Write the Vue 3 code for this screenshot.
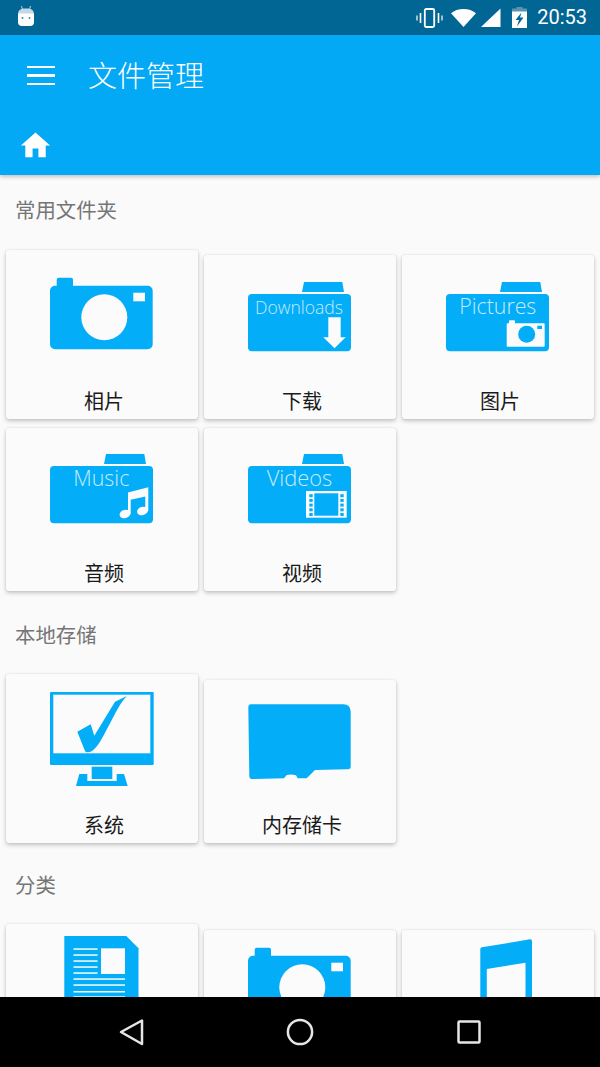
<template>
  <div class="screen">
    <!-- status bar -->
    <div class="status-bar">
      <svg class="android" width="18" height="20" viewBox="0 0 18 20">
        <path d="M4.500 0l1 3.500M13.500 0l-1 3.500" stroke="#b9d3e1" stroke-width="1" fill="none" />
        <path d="M1 8V8a5.500 5.500 0 0 1 5.500-5.500h5A5.500 5.500 0 0 1 17 8z" fill="#c3dae6" />
        <path d="M1 7.500h16V16a4 4 0 0 1-4 4H5a4 4 0 0 1-4-4z" fill="#fff" />
        <circle cx="5.500" cy="12" r="1" fill="#4a88a8" />
        <circle cx="12.500" cy="12" r="1" fill="#4a88a8" />
      </svg>
      <div class="status-right">
        <svg width="27" height="20" viewBox="0 0 27 20">
          <rect x="8.800" y="1" width="9.400" height="18" rx="1.500" fill="none" stroke="#fff" stroke-width="1.800" />
          <path d="M4.500 5v10M22.500 5v10" stroke="#fff" stroke-width="1.600" />
          <path d="M1 7.500v5M26 7.500v5" stroke="#dbe8ef" stroke-width="1.400" />
        </svg>
        <svg class="wifi" width="25" height="18" viewBox="0 0 25 18">
          <path d="M12.500 18L0 4.200C3.400 1.600 7.600 0 12.500 0S21.600 1.600 25 4.200z" fill="#fff" />
        </svg>
        <svg class="signal" width="20" height="19" viewBox="0 0 20 19">
          <path d="M0 19L19.500 0.500V19z" fill="#fff" />
        </svg>
        <svg class="battery" width="15" height="21" viewBox="0 0 15 21">
          <path d="M4.500 0h6v1.500H15V5H0V1.500h4.500z" fill="#5b93b0" />
          <path d="M0 4.500h15V21H0z" fill="#fff" />
          <path d="M9.500 5.500L3.500 13h3.500l-2 6.500L11.500 10.500H8z" fill="#026695" />
        </svg>
        <span class="clock">20:53</span>
      </div>
    </div>

    <!-- app bar -->
    <header class="app-bar">
      <div class="toolbar">
        <div class="menu-icon">
          <span></span>
          <span></span>
          <span></span>
        </div>
        <h1 class="app-title">文件管理</h1>
      </div>
      <div class="crumbs">
        <svg width="35" height="35" viewBox="0 0 24 24" fill="#fff">
          <path d="M10 20v-6h4v6h5v-8h3L12 3 2 12h3v8z" />
        </svg>
      </div>
    </header>

    <main class="content">
      <section v-for="section in sections" :key="section.title" :class="['section', section.cls]">
        <h2 class="section-title">{{ section.title }}</h2>
        <div class="grid">
          <div
            v-for="item in section.items"
            :key="item.icon"
            :class="['card', item.cls]"
          >
            <svg class="icon" width="120" height="110" viewBox="0 0 120 110">
              <!-- folder base, shared by the four library folders -->
              <template v-if="item.folder">
                <path d="M64 17h38.300l1.700 10H62z" fill="#04adf7" />
                <rect x="8" y="29" width="103" height="57.300" rx="4" fill="#04adf7" />
                <text
                  class="folder-text"
                  :x="item.textX"
                  y="49"
                  :font-size="item.textSize"
                  :textLength="item.textLen"
                  lengthAdjust="spacingAndGlyphs"
                >{{ item.folder }}</text>
              </template>

              <g v-if="item.icon === 'camera'">
                <path d="M14.700 25.700v-6a2 2 0 0 1 2-2H29a2 2 0 0 1 2 2v6h74.700a5 5 0 0 1 5 5v53.600a5 5 0 0 1-5 5H13a5 5 0 0 1-5-5V30.700a5 5 0 0 1 5-5z" fill="#04adf7" />
                <circle cx="62.300" cy="57.300" r="23" fill="#fbfbfb" />
                <rect x="91.300" y="32.700" width="11.700" height="8.600" fill="#fbfbfb" />
              </g>

              <path
                v-else-if="item.icon === 'download'"
                d="M88.300 52.300h12.400v20h5L94.500 83.300 83.300 72.300h5z"
                fill="#fbfbfb"
              />

              <g v-else-if="item.icon === 'picture'">
                <path d="M71 58.300v-2a1 1 0 0 1 1-1h4a1 1 0 0 1 1 1v2h28.700a1 1 0 0 1 1 1v21.400a1 1 0 0 1-1 1H69.700a1 1 0 0 1-1-1V59.300a1 1 0 0 1 1-1z" fill="#fbfbfb" />
                <circle cx="88.700" cy="69.300" r="8.500" fill="#04adf7" />
                <rect x="99.300" y="60.700" width="4.700" height="3.300" fill="#04adf7" />
              </g>

              <g v-else-if="item.icon === 'music'" fill="#fbfbfb">
                <path d="M86 55.500l20.300-5.200V74h-3V59.500l-14.600 3.300V77H86z" />
                <ellipse cx="83" cy="77" rx="5.500" ry="4.200" transform="rotate(-15 83 77)" />
                <ellipse cx="100.500" cy="74" rx="5.500" ry="4.200" transform="rotate(-15 100.500 74)" />
              </g>

              <g v-else-if="item.icon === 'film'">
                <rect x="66" y="54" width="40.700" height="26.700" fill="#fbfbfb" />
                <rect x="74.300" y="56.300" width="24" height="22.400" fill="#04adf7" />
                <g fill="#04adf7">
                  <rect v-for="n in 5" :key="n" x="69.300" :y="52.500 + n * 4.700" width="3.400" height="3" />
                  <rect v-for="n in 5" :key="'r' + n" x="100.300" :y="52.500 + n * 4.700" width="3.400" height="3" />
                </g>
              </g>

              <g v-else-if="item.icon === 'system'">
                <rect x="8" y="8" width="103.700" height="73" rx="1" fill="#04adf7" />
                <rect x="11.300" y="10.700" width="97" height="58.600" fill="#fbfbfb" />
                <path d="M35.300 47.700L48.700 40.300L52.300 51.700L73 17.700L84.700 12C76 21 67 43 58 57.700C54 64 50 68 46.300 68.300C44.500 68.500 43.500 68 43 67z" fill="#04adf7" />
                <path d="M37.300 90H82l3.700 12H34z" fill="#04adf7" />
                <path d="M45.300 88h29.400v9H45.300z" fill="#fbfbfb" />
                <rect x="49.700" y="82.700" width="20.600" height="12.300" fill="#04adf7" />
              </g>

              <path
                v-else-if="item.icon === 'sdcard'"
                d="M8.300 17.300Q8.500 14.300 11 14.300H103.300Q110.700 14.500 110.700 21.700V76.700Q110.700 79.300 106.700 79.300L75 80L66.700 88.300H57.700L56 85.300Q51 84 46.700 85L44 88.300L11.700 89Q9.500 89 9.300 86z"
                fill="#04adf7"
              />

              <g v-else-if="item.icon === 'doc'">
                <path d="M22.300 12h62l12.200 12.300V110H22.300z" fill="#04adf7" />
                <rect x="59" y="24.300" width="24" height="25.700" fill="#fbfbfb" />
                <rect v-for="y in [25, 31, 37, 43, 49]" :key="y" x="31.500" :y="y - 0.700" width="24.100" height="1.500" fill="#fbfbfb" />
                <rect v-for="y in [55, 61, 67.700, 73]" :key="y" x="31.500" :y="y - 0.700" width="51.500" height="1.500" fill="#fbfbfb" />
              </g>

              <path
                v-else-if="item.icon === 'note'"
                d="M42.300 19Q42.300 17.500 44 17.300L92 9.300Q94 9 94 11V100H87.500V32.700L48.800 39V100H42.300z"
                fill="#04adf7"
              />
            </svg>
            <div v-if="item.label" class="card-label">{{ item.label }}</div>
          </div>
        </div>
      </section>
    </main>

    <!-- navigation bar -->
    <nav class="nav-bar">
      <svg width="30" height="30" viewBox="0 0 30 30">
        <path d="M5 15L26 3.500V27z" fill="none" stroke="#e6e6e6" stroke-width="2.500" stroke-linejoin="round" />
      </svg>
      <svg width="30" height="30" viewBox="0 0 30 30">
        <circle cx="15" cy="15" r="12.100" fill="none" stroke="#e6e6e6" stroke-width="2.500" />
      </svg>
      <svg width="30" height="30" viewBox="0 0 30 30">
        <rect x="4.500" y="4.500" width="21" height="21" rx="1" fill="none" stroke="#e6e6e6" stroke-width="2.500" />
      </svg>
    </nav>
  </div>
</template>

<script setup>
// the last row runs under the navigation bar, so its labels never show
const sections = [
  {
    title: '常用文件夹',
    cls: 'section-folders',
    items: [
      { label: '相片', icon: 'camera', cls: 'tall' },
      { label: '下载', icon: 'download', folder: 'Downloads', textX: 15, textSize: 19, textLen: 88 },
      { label: '图片', icon: 'picture', folder: 'Pictures', textX: 21.3, textSize: 22, textLen: 77 },
      { label: '音频', icon: 'music', folder: 'Music', textX: 31.3, textSize: 22, textLen: 56, cls: 'short' },
      { label: '视频', icon: 'film', folder: 'Videos', textX: 26.7, textSize: 22, textLen: 65.6, cls: 'short' }
    ]
  },
  {
    title: '本地存储',
    cls: 'section-storage',
    items: [
      { label: '系统', icon: 'system', cls: 'tall' },
      { label: '内存储卡', icon: 'sdcard', cls: 'low' }
    ]
  },
  {
    title: '分类',
    cls: 'section-types',
    items: [
      { icon: 'doc', cls: 'flush tall' },
      { icon: 'camera', cls: 'flush low' },
      { icon: 'note', cls: 'flush low' }
    ]
  }
]
</script>

<style>
body {
  margin: 0;
  background: #fafafa;
}
</style>

<style scoped>
.screen {
  width: 600px;
  height: 1067px;
  display: flex;
  flex-direction: column;
  overflow: hidden;
  background: #fafafa;
  font-family: "Noto Sans CJK SC", "Noto Sans", sans-serif;
}

.status-bar {
  height: 35px;
  flex: none;
  background: #026695;
  display: flex;
  align-items: center;
  justify-content: space-between;
  padding: 0 13px 0 17px;
}

.android {
  margin-top: -3px;
}

.status-right {
  display: flex;
  align-items: center;
}

.wifi {
  margin-left: 8px;
}

.signal {
  margin-left: 5px;
}

.battery {
  margin-left: 11px;
}

.clock {
  margin-left: 10px;
  color: #fff;
  font: 20px/35px Roboto, sans-serif;
}

.app-bar {
  height: 140px;
  flex: none;
  background: #03a9f4;
  box-shadow: 0 2px 4px rgba(0, 0, 0, 0.22);
  position: relative;
  z-index: 1;
}

.toolbar {
  height: 81px;
  display: flex;
  align-items: center;
  padding-left: 27px;
}

.menu-icon {
  width: 28px;
  display: flex;
  flex-direction: column;
  gap: 6px;
}

.menu-icon span {
  height: 2.500px;
  background: #fff;
}

.app-title {
  margin: 0 0 3px 33px;
  font-size: 29px;
  font-weight: 300;
  line-height: 40px;
  color: #fff;
}

.crumbs {
  height: 59px;
  display: flex;
  align-items: center;
  padding-left: 18px;
}

.content {
  flex: 1;
  min-height: 0;
  overflow: hidden;
}

.section-title {
  margin: 0;
  padding: 20px 0 27px 15px;
  font-size: 20.400px;
  font-weight: 400;
  line-height: 28px;
  color: #757575;
}

.section-storage .section-title {
  padding-bottom: 26px;
}

.section-types .section-title {
  padding: 18px 0 26px 15px;
}

.grid {
  display: grid;
  grid-template-columns: repeat(3, 192px);
  column-gap: 6px;
  row-gap: 9px;
  align-items: end;
  padding: 0 6px 9px;
}

.card {
  height: 164px;
  box-sizing: border-box;
  padding-top: 10px;
  background: #fbfbfb;
  border-radius: 3px;
  box-shadow: 0 2px 4px rgba(0, 0, 0, 0.22), 0 0 2px rgba(0, 0, 0, 0.1);
  display: flex;
  flex-direction: column;
  overflow: hidden;
}

.card.tall {
  height: 169px;
}

.card.short {
  height: 163px;
  padding-top: 9px;
}

.card.low {
  height: 163px;
}

.card.flush {
  padding-top: 0;
}

.icon {
  display: block;
  flex: none;
  margin: 0 auto;
}

.folder-text {
  fill: #c6ebfd;
  font-family: "Open Sans", sans-serif;
  font-weight: 300;
}

.card-label {
  margin-top: auto;
  height: 36px;
  padding-left: 4px;
  font-size: 20px;
  line-height: 36px;
  text-align: center;
  color: #1a1a1a;
}

.nav-bar {
  height: 70px;
  flex: none;
  background: #000;
  display: flex;
  align-items: center;
  justify-content: center;
  gap: 138.700px;
}
</style>
